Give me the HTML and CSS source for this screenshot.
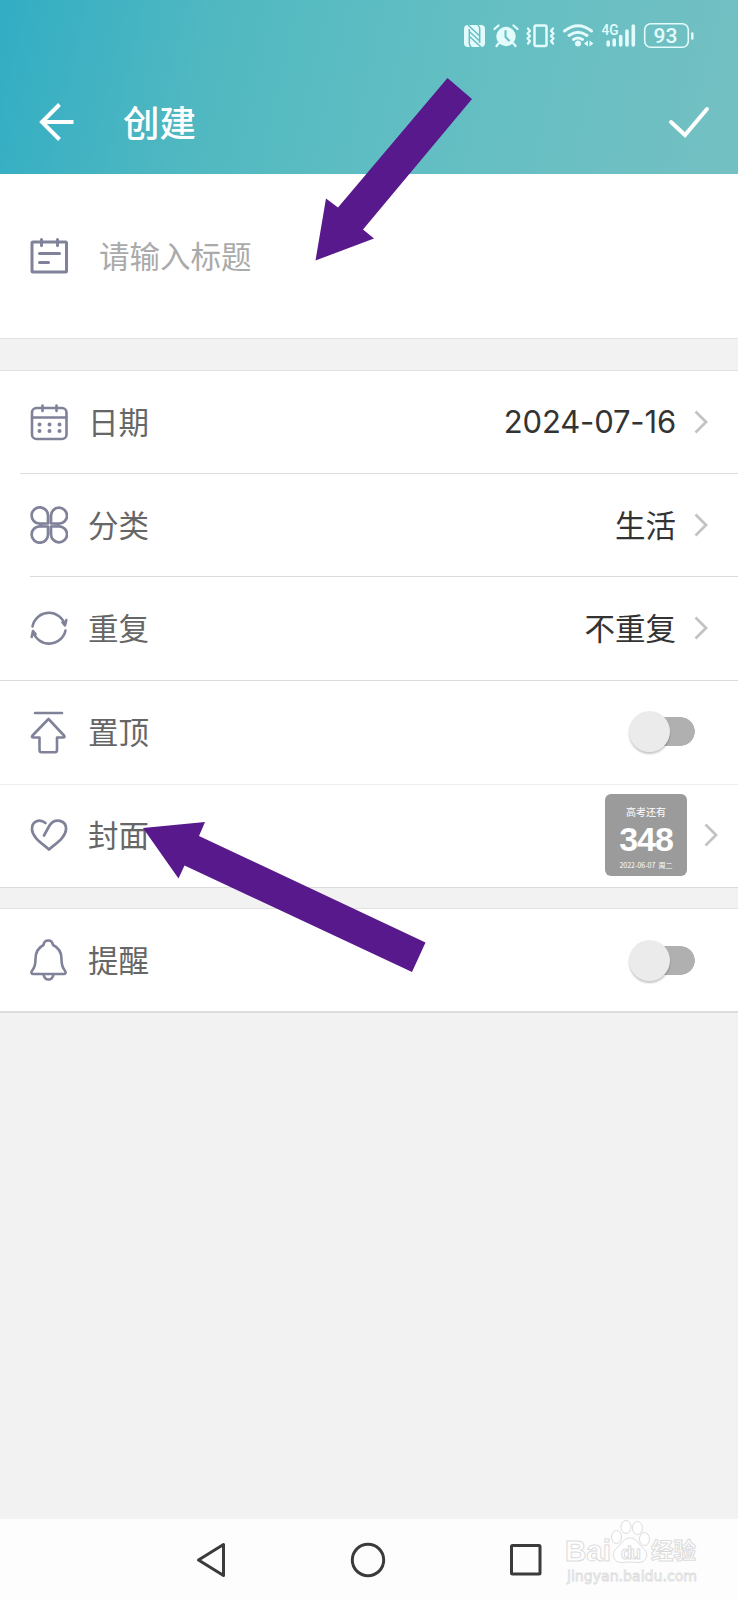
FILE: index.html
```html
<!DOCTYPE html>
<html lang="zh-CN">
<head>
<meta charset="utf-8">
<title>创建</title>
<link rel="stylesheet" href="styles.css">
</head>
<body>
<div class="screen">
  <header class="header">
    <div class="status">
      <svg width="236" height="30" viewBox="460 20 236 30" fill="none" stroke="#e4fbfc" stroke-width="2" stroke-linecap="round" stroke-linejoin="round">
        <rect x="464" y="25" width="21" height="22" rx="4" fill="#e4fbfc" stroke="none"/>
        <path stroke="#63bdc4" stroke-width="1.500" stroke-linecap="butt" d="M469.300 29v14.500q0 2 2 3.500M479.700 43V28.500q0-2-2-3.500M468 25l11.700 11M469.300 31.500l10.400 9.500M469.500 36.500l11.500 10.500"/>
        <circle cx="506" cy="36.500" r="9.700" fill="#e4fbfc" stroke="none"/>
        <path stroke-width="2.300" d="M494.500 29l4-3.500M517.500 29l-4-3.500M498.500 43.500l-2 2.500M513.500 43.500l2 2.500"/>
        <path stroke="#63bdc4" d="M505.500 31v6l3.500 3.500"/>
        <rect x="534.500" y="25.500" width="12" height="20.500" rx="1.500" stroke-width="2.500"/>
        <path stroke-width="2.300" d="M528 28.500l2 2.500-2.500 2.500 2.500 2.500-2.500 2.500 2.500 2.500-2 2.500M553 28.500l-2 2.500 2.500 2.500-2.500 2.500 2.500 2.500-2.500 2.500 2 2.500"/>
        <path stroke-width="2.900" d="M564.500 31q13.500-10.500 27 0M569 35.500q9-6.500 18 0M573.500 39.500q4.500-3 9 0"/>
        <circle cx="578" cy="43.500" r="3" fill="#e4fbfc" stroke="none"/>
        <path fill="#e4fbfc" stroke="none" d="M584 43.500l4-3v6zM593.500 43.500l-4-3v6z"/>
        <text class="network" x="601.500" y="35" textLength="17" lengthAdjust="spacingAndGlyphs">4G</text>
        <path stroke-width="3.600" d="M608.200 42v3M614.200 40v5M620.700 36.500V45M627 31v14M633.300 26v19"/>
        <rect x="644.700" y="23.700" width="43.600" height="23.600" rx="6" stroke-width="1.600"/>
        <path stroke-width="2.500" d="M692.300 33.500v5"/>
        <text class="battery" x="665.500" y="43" text-anchor="middle">93</text>
      </svg>
    </div>
    <div class="appbar">
      <svg width="36" height="40" viewBox="0 0 36 40" fill="none" stroke="#fff" stroke-width="4"><path d="M21.500 2.500L4 20l17.500 17.500M4 20h31.500"/></svg>
      <h1 class="heading">创建</h1>
      <svg width="42" height="32" viewBox="0 0 42 32" fill="none" stroke="#fff" stroke-width="4" stroke-linecap="round"><path d="M3 16l14 13L39 3"/></svg>
    </div>
  </header>

  <section class="title-card">
    <svg class="icon" viewBox="0 0 38 38" stroke-width="3"><rect x="2" y="5" width="34.500" height="30" rx="1"/><path d="M11.500 2.500v6M27.500 2.500v6M9.500 16.500h20M9.500 25.500h9"/></svg>
    <span class="placeholder">请输入标题</span>
  </section>

  <section class="group">
    <div class="row first">
      <svg class="icon" viewBox="0 0 38 38" stroke-width="2.600"><rect x="2" y="5" width="34.500" height="31" rx="4.500"/><path d="M12.500 2.500v5.500M26.500 2.500v5.500M2 14.500h34"/><path stroke-width="4" d="M9.500 21.500h.01M19.500 21.500h.01M29.500 21.500h.01M9.500 28h.01M19.500 28h.01M29.500 28h.01"/></svg>
      <span class="label">日期</span>
      <span class="value date">2024-07-16</span>
      <svg class="chevron" viewBox="0 0 14 24"><path d="M1.500 1.500L12 12 1.500 22.500"/></svg>
    </div>
    <div class="row inset-20">
      <svg class="icon" viewBox="0 0 38 38" stroke-width="2.700"><path d="M18 17.500V10a8.200 8.200 0 1 0-8.200 7.700zM21 17.500V10a8 8 0 1 1 8 7.700zM18 20.500V28a8.200 8.200 0 1 1-8.200-7.700zM21 20.500V28a8 8 0 1 0 8-7.700z"/></svg>
      <span class="label">分类</span>
      <span class="value">生活</span>
      <svg class="chevron" viewBox="0 0 14 24"><path d="M1.500 1.500L12 12 1.500 22.500"/></svg>
    </div>
    <div class="row inset-30">
      <svg class="icon" viewBox="0 0 38 38" stroke-width="2.600"><path d="M2.500 17.500a16.700 16.700 0 0 1 32.500-1.500M36.300 11l-1.300 5.500-2.500-3M35.500 21.500a16.700 16.700 0 0 1-32.500.5M1.700 28l1.300-6 2.500 3"/></svg>
      <span class="label">重复</span>
      <span class="value">不重复</span>
      <svg class="chevron" viewBox="0 0 14 24"><path d="M1.500 1.500L12 12 1.500 22.500"/></svg>
    </div>
    <div class="row strong">
      <svg class="icon tall" viewBox="0 0 38 44" stroke-width="2.600"><path d="M5 3h27M18.500 9L2.500 25.500q-1.500 2 1 2h6V40q0 2.300 2 2.300h13.500q2 0 2-2.300V27.500h6q2.500 0 1-2z"/></svg>
      <span class="label">置顶</span>
      <span class="toggle"></span>
    </div>
    <div class="row faint">
      <svg class="icon" viewBox="0 0 38 38" stroke-width="2.700"><path d="M15.500 7C9 2 1.500 6 2 13.500c.5 8.500 11 14.500 17 20 6-5.500 16.500-11.500 17-20C36.500 4 25 1.500 19.500 9.500L14 19.500"/></svg>
      <span class="label">封面</span>
      <div class="cover">
        <span class="cover-name">高考还有</span>
        <span class="cover-days">348</span>
        <span class="cover-date">2022-06-07&nbsp; 周二</span>
      </div>
      <svg class="chevron" viewBox="0 0 14 24"><path d="M1.500 1.500L12 12 1.500 22.500"/></svg>
    </div>
  </section>

  <section class="group reminder">
    <div class="row">
      <svg class="icon tall" viewBox="0 0 38 44" stroke-width="2.600"><path d="M13.500 7q.5-4.500 4.700-4.500T23 7c6.500 3 8.500 8 8.500 14 0 6 .5 8 3 11 2 2.500 1 4-1 4H3.500c-2 0-3-1.500-1-4 2.500-3 3-5 3-11 0-6 2-11 8-14zM13.500 36.500q1 5 5 5t5-5"/></svg>
      <span class="label">提醒</span>
      <span class="toggle"></span>
    </div>
  </section>

  <nav class="navbar">
    <svg width="30" height="36" viewBox="0 0 30 36"><path d="M27.500 2.500v31L2.500 18z"/></svg>
    <svg width="36" height="36" viewBox="0 0 36 36"><circle cx="18" cy="18" r="15.700"/></svg>
    <svg width="32" height="32" viewBox="0 0 32 32"><rect x="1.500" y="1.500" width="28.500" height="28.500" rx="1"/></svg>
  </nav>

  <svg class="watermark" width="140" height="70" viewBox="0 0 140 70">
    <text class="wm-brand" x="5" y="47" textLength="46" lengthAdjust="spacingAndGlyphs">Bai</text>
    <g class="wm-paw">
      <ellipse cx="56.500" cy="23" rx="5" ry="6.500"/><ellipse cx="66" cy="13" rx="5" ry="6.500"/><ellipse cx="77.500" cy="14" rx="5" ry="6.500"/><ellipse cx="84.500" cy="25" rx="5" ry="6.500"/>
      <path d="M70 24c-6 0-8 5-12 9-4 3.500-6 7-4 11 3 6.500 10 4 16 4s13 2.500 16-4c2-4 0-7.500-4-11-4-4-6-9-12-9z"/>
    </g>
    <text class="wm-du" x="61" y="44.500" textLength="20">du</text>
    <text class="wm-cn" x="91" y="45" textLength="45">经验</text>
    <text class="wm-url" x="7" y="67" textLength="130" lengthAdjust="spacingAndGlyphs">jingyan.baidu.com</text>
  </svg>

  <svg class="pointers" width="738" height="1600" viewBox="0 0 738 1600">
    <path d="M447.500 78L472 99 363 229.500l11 9L315.500 260.500 326 198.500l12 9z"/>
    <path d="M143 828l62-6-6 14 226.500 106.500L412 972 184.500 865.500 178.500 878.500z"/>
  </svg>
</div>
</body>
</html>
```
FILE: styles.css
```css
* { box-sizing: border-box; }
body { margin: 0; background: #f2f2f2; font-family: "Noto Sans CJK SC", sans-serif; }
svg { display: block; flex: none; }
.screen { position: relative; width: 738px; height: 1600px; display: flex; flex-direction: column; overflow: hidden; background: #f2f2f2; }

.header { height: 174px; flex: none; background: linear-gradient(103deg, #32adc4 0%, #50b8c1 28%, #60bec3 55%, #74c0c2 100%); }
.status { height: 70px; padding: 20px 42px 0 0; display: flex; justify-content: flex-end; }
.network { font: 500 14px Roboto, sans-serif; fill: #e4fbfc; stroke: none; }
.battery { font: 500 21px Roboto, sans-serif; fill: #e4fbfc; stroke: none; }
.appbar { height: 104px; padding: 0 28px 0 38px; display: flex; align-items: center; }
.heading { flex: 1; margin: 0 0 0 49px; font-size: 36.500px; line-height: 54px; font-weight: 500; color: #fff; }

.title-card { height: 165px; flex: none; display: flex; align-items: center; gap: 31px; padding: 0 30px; background: #fff; border-bottom: 1px solid #e2e2e2; }
.placeholder { padding-bottom: 2px; font-size: 30.500px; line-height: 44px; color: #aaa; }

.icon { width: 38px; height: 38px; fill: none; stroke: #7f8298; stroke-linecap: round; stroke-linejoin: round; }
.icon.tall { height: 44px; }

.group { flex: none; margin-top: 31px; background: #fff; border-top: 1px solid #e2e2e2; border-bottom: 1px solid #dcdcdc; }
.reminder { margin-top: 20px; border-bottom: 2px solid #dcdcdc; }
.reminder .row { height: 102px; }
.row { height: 103.500px; display: flex; align-items: center; padding: 0 30px; background: linear-gradient(#dcdcdc, #dcdcdc) right top / 0 1px no-repeat; }
.row.first { height: 102px; }
.row.inset-20 { height: 103px; background-size: 718px 1px; }
.row.inset-30 { height: 104px; background-size: 708px 1px; }
.row.strong { background-size: 738px 1px; }
.row.faint { background-image: linear-gradient(#eee, #eee); background-size: 738px 1px; padding-right: 20px; }
.label { flex: 1; margin-left: 20px; padding-bottom: 2px; font-size: 30.500px; line-height: 44px; color: #666; }
.value { margin-right: 1px; padding-bottom: 2px; font-size: 30.500px; line-height: 44px; color: #333; }
.date { padding-bottom: 0; font-family: Inter, sans-serif; font-size: 31px; letter-spacing: -0.150px; }
.chevron { width: 14px; height: 24px; margin-left: 17px; fill: none; stroke: #c3c3c3; stroke-width: 2.800; }

.toggle { width: 66px; height: 41px; margin-right: 13px; display: flex; align-items: center; background: linear-gradient(#b0b0b0, #b0b0b0) 20px 50% / 30px 29px no-repeat, radial-gradient(circle at 51.500px 20.500px, #b0b0b0 14px, transparent 14.600px); }
.toggle::before { content: ""; width: 41px; height: 41px; border-radius: 50%; background: #ebebeb; box-shadow: 0 2px 2px rgba(0, 0, 0, .22); }

.cover { width: 82px; height: 82px; border-radius: 6px; background: #9b9b9b; color: #fff; display: flex; flex-direction: column; align-items: center; padding-top: 10px; }
.cover-name { font-size: 10px; line-height: 16px; }
.cover-days { font: bold 34px/38px "Liberation Sans", sans-serif; letter-spacing: -1px; }
.cover-date { font-size: 7px; line-height: 14px; white-space: nowrap; }

.navbar { margin-top: auto; height: 81px; flex: none; display: flex; align-items: center; justify-content: space-between; padding: 0 196px 0 196px; background: #fdfdfd; }
.navbar svg { fill: none; stroke: #3b3b3b; stroke-width: 3; stroke-linejoin: round; }

.watermark { position: absolute; left: 560px; top: 1514px; overflow: visible; fill: #fff; stroke: #dcdcdc; stroke-width: 1; }
.wm-brand { font: bold 30px "Liberation Sans", sans-serif; }
.wm-du { font: bold 18px "Liberation Sans", sans-serif; }
.wm-cn { font: bold 22.500px "Noto Sans CJK SC", sans-serif; }
.wm-url { font: 14px "DejaVu Sans", sans-serif; stroke-width: .8; }
.pointers { position: absolute; left: 0; top: 0; fill: #58198c; pointer-events: none; }
```
